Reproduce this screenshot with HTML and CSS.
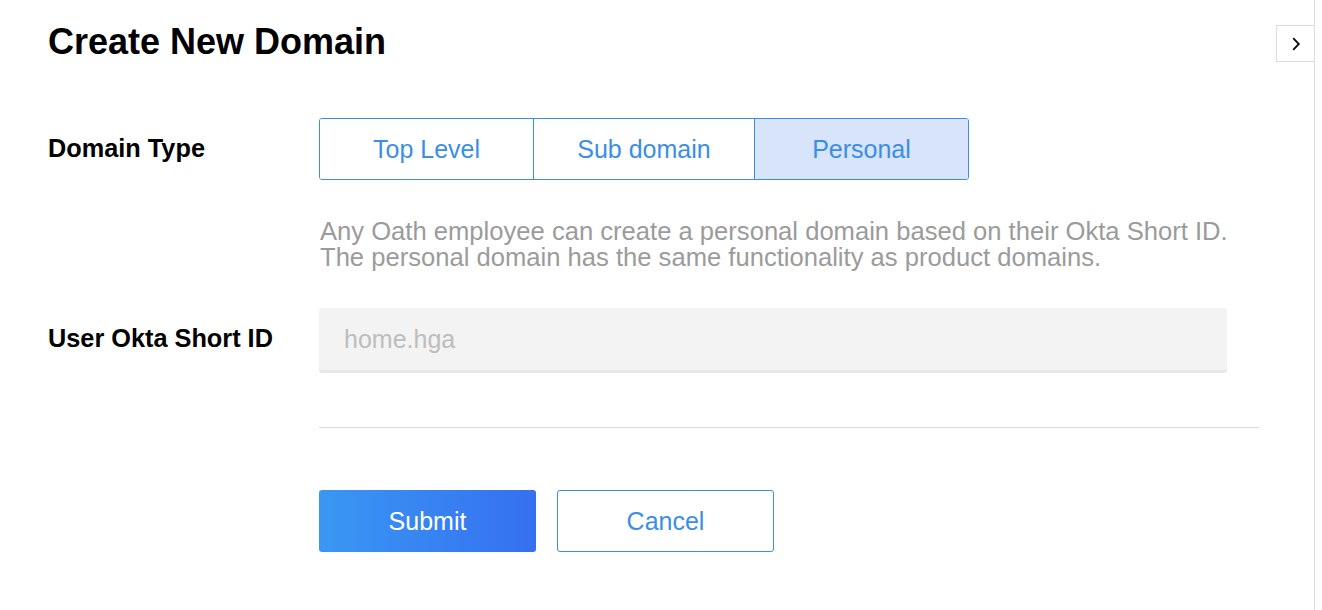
FILE: index.html
```html
<!DOCTYPE html>
<html>
<head>
<meta charset="utf-8">
<link rel="stylesheet" href="styles.css">
</head>
<body>
<div class="page">
  <main class="main">
    <h1 class="title">Create New Domain</h1>
    <div class="row row-type">
      <div class="label">Domain Type</div>
      <div class="field">
        <div class="segmented">
          <button class="seg seg-top">Top Level</button>
          <button class="seg seg-sub">Sub domain</button>
          <button class="seg seg-personal active">Personal</button>
        </div>
        <p class="desc">Any Oath employee can create a personal domain based on their Okta Short ID.<br>The personal domain has the same functionality as product domains.</p>
      </div>
    </div>
    <div class="row row-id">
      <div class="label">User Okta Short ID</div>
      <div class="field">
        <input class="input" type="text" placeholder="home.hga">
      </div>
    </div>
    <div class="row">
      <div class="label"></div>
      <div class="field">
        <hr class="divider">
        <div class="actions">
          <button class="btn btn-primary">Submit</button>
          <button class="btn btn-secondary">Cancel</button>
        </div>
      </div>
    </div>
  </main>
  <aside class="side">
    <button class="toggle" aria-label="Expand">
      <svg width="12" height="14" viewBox="0 0 12 14"><path d="M3.2 1.2 L8.8 7 L3.2 12.8" fill="none" stroke="#111" stroke-width="1.9"/></svg>
    </button>
  </aside>
</div>
</body>
</html>
```
FILE: styles.css
```css
* { box-sizing: border-box; }
html, body { margin: 0; padding: 0; background: #fff; }
body {
  font-family: "Liberation Sans", Arial, Helvetica, sans-serif;
  color: #000;
  width: 1322px;
  height: 610px;
  overflow: hidden;
}
.page {
  display: flex;
  height: 610px;
}
.main {
  flex: 1;
  padding: 21px 0 0 48px;
}
.title {
  margin: 0;
  font-size: 36px;
  line-height: 42px;
  font-weight: bold;
}
.row {
  display: flex;
}
.label {
  width: 271px;
  flex: none;
  font-weight: bold;
  font-size: 25.3px;
  line-height: 61px;
}
.field {
  flex: none;
  width: 941px;
}
.row-type { margin-top: 55px; }
.segmented {
  display: flex;
  width: 650px;
  height: 62px;
  border: 1px solid #3a8ee6;
  border-radius: 3px;
  overflow: hidden;
}
.seg {
  font-family: inherit;
  font-size: 25px;
  color: #3a8ee6;
  background: #fff;
  border: 0;
  padding: 0;
  margin: 0;
}
.seg + .seg { border-left: 1px solid #3a8ee6; }
.seg-top { width: 213px; }
.seg-sub { width: 221px; }
.seg-personal { flex: 1; }
.seg.active { background: #d7e4fa; }
.desc {
  margin: 38px 0 0 1px;
  font-size: 25.6px;
  line-height: 26px;
  color: #9b9b9b;
}
.row-id { margin-top: 38px; }
.input {
  display: block;
  width: 908px;
  height: 62px;
  border: 0;
  border-radius: 3px;
  background: #f3f3f3;
  box-shadow: 0 3px 0 #e8e8e8;
  padding: 0 0 0 25px;
  font-family: inherit;
  font-size: 25px;
  color: #333;
  outline: none;
}
.input::placeholder { color: #bdbdbd; }
.divider {
  margin: 57px 0 0 0;
  border: 0;
  border-top: 1px solid #d9d9d9;
  width: 940px;
}
.actions {
  display: flex;
  gap: 21px;
  margin-top: 62px;
}
.btn {
  width: 217px;
  height: 62px;
  border-radius: 3px;
  font-family: inherit;
  font-size: 25px;
  padding: 0;
}
.btn-primary {
  border: 0;
  color: #fff;
  background: linear-gradient(to right, #3a97f3, #3570f0);
}
.btn-secondary {
  border: 1px solid #3a8ee6;
  color: #3a8ee6;
  background: #fff;
}
.side {
  position: relative;
  width: 8px;
  flex: none;
  border-left: 1px solid #dcdcdc;
}
.toggle {
  position: absolute;
  right: 8px;
  top: 25px;
  width: 38px;
  height: 37px;
  border: 1px solid #dcdcdc;
  border-right: 0;
  background: #fff;
  padding: 0;
  display: flex;
  align-items: center;
  justify-content: center;
}
```
